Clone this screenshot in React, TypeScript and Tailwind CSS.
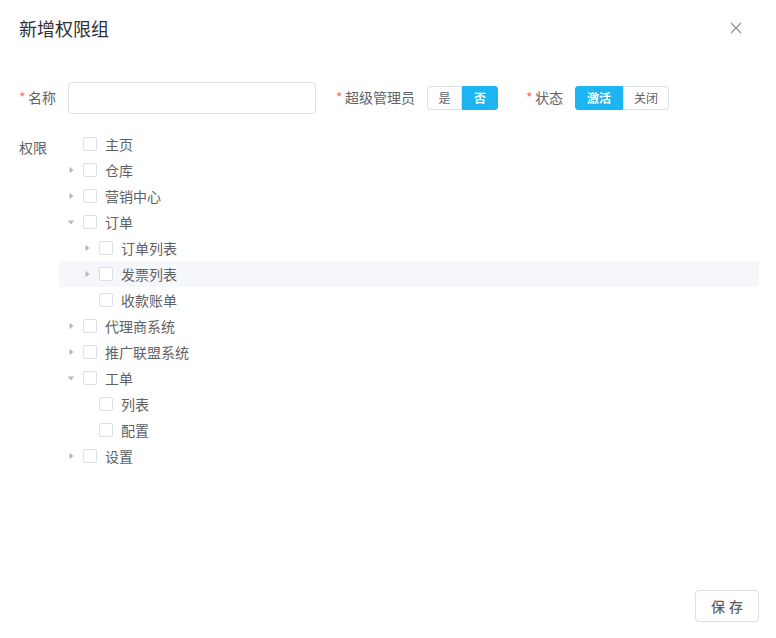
import React, { useState } from 'react';

interface TreeNode {
  label: string;
  children?: TreeNode[];
  expanded?: boolean;
}

const tree: TreeNode[] = [
  { label: '主页' },
  { label: '仓库', children: [{ label: '-' }] },
  { label: '营销中心', children: [{ label: '-' }] },
  {
    label: '订单',
    expanded: true,
    children: [
      { label: '订单列表', children: [{ label: '-' }] },
      { label: '发票列表', children: [{ label: '-' }] },
      { label: '收款账单' },
    ],
  },
  { label: '代理商系统', children: [{ label: '-' }] },
  { label: '推广联盟系统', children: [{ label: '-' }] },
  {
    label: '工单',
    expanded: true,
    children: [{ label: '列表' }, { label: '配置' }],
  },
  { label: '设置', children: [{ label: '-' }] },
];

function Caret({ open }: { open: boolean }) {
  return (
    <svg
      width="8"
      height="8"
      viewBox="0 0 8 8"
      className={open ? 'rotate-90' : ''}
      fill="#b4b8bf">
      <polygon points="2.5,0.8 6.5,4 2.5,7.2" />
    </svg>
  );
}

function Required() {
  return <span className="inline-block w-[9px] text-[#f56c6c]">*</span>;
}

function TreeRows({ nodes, level }: { nodes: TreeNode[]; level: number }) {
  return (
    <>
      {nodes.map((node) => {
        const hasKids = !!node.children;
        const hover = node.label === '发票列表';
        return (
          <React.Fragment key={node.label}>
            <div
              className={`flex h-[26px] items-center ${hover ? 'bg-[#f5f7fa]' : ''}`}
              style={{ paddingLeft: (level - 1) * 16 }}>
              <span className="flex w-6 justify-center">
                {hasKids && <Caret open={!!node.expanded} />}
              </span>
              <span className="mr-2 h-[14px] w-[14px] rounded-[2px] border border-[#dcdfe6] bg-white" />
              <span className="text-[14px] text-[#606266]">{node.label}</span>
            </div>
            {node.expanded && node.children && (
              <TreeRows nodes={node.children} level={level + 1} />
            )}
          </React.Fragment>
        );
      })}
    </>
  );
}

export default function App() {
  const [admin, setAdmin] = useState(false);
  const [active, setActive] = useState(true);

  return (
    <div
      className="flex h-[638px] w-[776px] flex-col bg-white"
      style={{ fontFamily: '"Noto Sans CJK SC", "Liberation Sans", sans-serif' }}>
      <div className="flex items-center justify-between pl-[19px] pr-[34px] pt-4">
        <h1 className="text-[18px] leading-6 text-[#303133]">新增权限组</h1>
        <svg width="12" height="12" viewBox="0 0 12 12" stroke="#909399" strokeWidth="1.2">
          <path d="M1 1L11 11M11 1L1 11" />
        </svg>
      </div>

      <div className="mt-[42px] flex h-8 items-center pl-[19px] text-[14px] leading-5 text-[#606266]">
        <div className="w-[49px] -translate-y-px">
          <Required />
          名称
        </div>
        <input className="h-8 w-[248px] rounded-[4px] border border-[#dcdfe6] px-3 outline-none" />

        <div className="ml-5 mr-3 -translate-y-px">
          <Required />
          超级管理员
        </div>
        <div className="flex h-6 text-[12px]">
          <button
            onClick={() => setAdmin(true)}
            className={`w-[35px] rounded-l-[3px] border ${
              admin
                ? 'border-[#1cb5f2] bg-[#1cb5f2] font-bold text-white'
                : 'border-[#dcdfe6] text-[#606266]'
            }`}>
            是
          </button>
          <button
            onClick={() => setAdmin(false)}
            className={`w-[36px] rounded-r-[3px] border ${
              !admin
                ? 'border-[#1cb5f2] bg-[#1cb5f2] font-bold text-white'
                : 'border-[#dcdfe6] text-[#606266]'
            }`}>
            否
          </button>
        </div>

        <div className="ml-7 mr-3 -translate-y-px">
          <Required />
          状态
        </div>
        <div className="flex h-6 text-[12px]">
          <button
            onClick={() => setActive(true)}
            className={`w-[48px] rounded-l-[3px] border ${
              active
                ? 'border-[#1cb5f2] bg-[#1cb5f2] font-bold text-white'
                : 'border-[#dcdfe6] text-[#606266]'
            }`}>
            激活
          </button>
          <button
            onClick={() => setActive(false)}
            className={`w-[46px] rounded-r-[3px] border ${
              !active
                ? 'border-[#1cb5f2] bg-[#1cb5f2] font-bold text-white'
                : 'border-[#dcdfe6] text-[#606266]'
            }`}>
            关闭
          </button>
        </div>
      </div>

      <div className="mt-[17px] flex pl-[19px]">
        <div className="w-10 pt-[3px] text-[14px] leading-[26px] text-[#606266]">权限</div>
        <div className="w-[700px]">
          <TreeRows nodes={tree} level={1} />
        </div>
      </div>

      <div className="mt-auto flex justify-end pb-4 pr-[17px]">
        <button className="flex h-8 w-16 items-center justify-center gap-[4px] rounded-[4px] border border-[#dcdfe6] text-[14px] font-medium text-[#606266]">
          <span>保</span>
          <span>存</span>
        </button>
      </div>
    </div>
  );
}
